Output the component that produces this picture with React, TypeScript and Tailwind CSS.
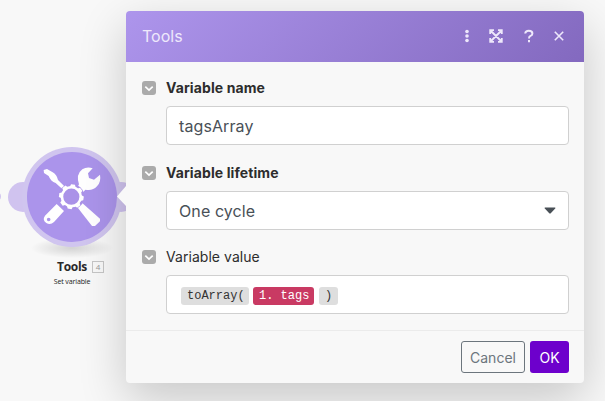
import type { ReactNode } from 'react';

const teeth = [0, 45, 90, 135, 180, 225, 270, 315];

function ToolsGlyph() {
  return (
    <svg viewBox="0 0 252 270" className="absolute left-[30px] top-[150px] h-[90px] w-[84px]" fill="#fff">
      <path d="M41 60L51 57L68 67Q80 73 84 90L103 109L96 116L77 99Q62 94 56 78L42 69Z" />
      <path d="M143 110L147 103Q137 73 157 58Q171 49 188 55L174 70L177 84L192 89L210 74Q214 95 201 109Q187 124 166 119L157 129Z" />
      <path d="M141 170L154 157L210 206V214L195 228H186Z" />
      <path fillRule="evenodd" d="M80 162L102 183L72 216Q61 226 49 219Q36 210 45 197ZM56 203A5.5 5.5 0 1 0 56 214A5.5 5.5 0 1 0 56 203Z" />
      <circle cx="124" cy="140" r="39" fill="#aa92e8" />
      <circle cx="124" cy="140" r="28" fill="none" stroke="#fff" strokeWidth="7.5" />
      {teeth.map((angle) => (
        <path key={angle} d="M118 103H130L133 112H115Z" transform={`rotate(${angle + 8} 124 140)`} />
      ))}
    </svg>
  );
}

function FieldLabel({ children, strong = false }: { children: ReactNode; strong?: boolean }) {
  return (
    <div className="flex h-[18px] items-center">
      <span className="mr-[10px] flex size-[14px] shrink-0 items-center justify-center rounded-[3px] bg-[#ababab]">
        <svg viewBox="0 0 14 14" className="size-[14px]" fill="none" stroke="#fff" strokeWidth="1.7">
          <path d="M3.3 5.7L7 9.1L10.7 5.7" />
        </svg>
      </span>
      <span className={strong ? 'text-[14px] leading-[18px] font-bold tracking-[0.1px] text-[#2d2d2d]' : 'text-[14px] leading-[18px] tracking-[0.05px] text-[#2d2d2d]'}>
        {children}
      </span>
    </div>
  );
}

function Field({ children }: { children: ReactNode }) {
  return (
    <div className="ml-6 flex h-[39px] items-center rounded-[4px] border border-[#d0d0d0] bg-white px-3 text-[16px] tracking-[0.1px] text-[#495057]">
      {children}
    </div>
  );
}

export default function App() {
  return (
    <div className="relative h-[401px] w-[605px] overflow-hidden bg-[#f8f8f8] font-['Inter',sans-serif]">
      <div className="absolute left-[27px] top-[237px] h-[22px] w-[90px] bg-[radial-gradient(ellipse_at_center,rgba(0,0,0,0.15),transparent_65%)]" />
      <svg viewBox="0 0 140 260" className="absolute left-0 top-0 h-[260px] w-[140px]">
        <circle cx="-3" cy="196.5" r="4" fill="#d2c6ee" />
        <circle cx="23" cy="197" r="15" fill="#d0c3ef" />
        <circle cx="121" cy="197" r="15" fill="#d0c3ef" />
        <circle cx="72" cy="197" r="50" fill="#d0c5ef" />
        <circle cx="72" cy="197" r="45" fill="#ab94eb" />
      </svg>
      <ToolsGlyph />
      <div className="absolute left-[57px] top-[259px] flex items-center font-['Open_Sans',sans-serif]">
        <span className="w-[30px] text-[12px] leading-[15px] font-bold tracking-[-0.3px] text-[#292929]">Tools</span>
        <span className="ml-[5px] flex h-[12px] w-[12px] items-center justify-center border border-[#c6c6c6] text-[8px] leading-none text-[#999]">4</span>
      </div>
      <div className="absolute left-[42px] top-[275px] w-[60px] scale-x-[0.88] text-center font-['Open_Sans',sans-serif] text-[8px] leading-[12px] tracking-[-0.15px] text-[#222]">Set variable</div>

      <div className="absolute left-[126px] top-[11px] flex h-[372px] w-[458px] flex-col rounded-[4px] bg-[#f8f8f8] shadow-[0_16px_48px_rgba(0,0,0,0.2)]">
        <svg viewBox="0 0 9 20" className="absolute -left-[9px] top-[175px] h-[20px] w-[9px]"><path d="M9 0V20L0 10.5Z" fill="#f8f8f8" /></svg>
        <header className="flex h-[51px] shrink-0 items-center justify-between rounded-t-[4px] bg-[linear-gradient(135deg,#ad95ec,#8369bf)] pb-[2px] pl-4 pr-5 text-[#eee8fb]">
          <h1 className="text-[16px] leading-5">Tools</h1>
          <div className="flex h-5 items-center">
            <svg viewBox="0 0 4 14" className="h-[14px] w-[4px]" fill="currentColor">
              <circle cx="2" cy="2.5" r="1.8" /><circle cx="2" cy="7" r="1.8" /><circle cx="2" cy="11.5" r="1.8" />
            </svg>
            <svg viewBox="0 0 14 14" className="ml-5 h-[14px] w-[14px]" fill="none" stroke="currentColor" strokeWidth="1.8">
              <path d="M1.2 5V1.2H5M9 1.2H12.8V5M12.8 9V12.8H9M5 12.8H1.2V9M1.5 1.5L12.5 12.5M12.5 1.5L1.5 12.5" />
            </svg>
            <svg viewBox="0 0 10 14" className="ml-[21px] h-[14px] w-[10px]" fill="none" stroke="currentColor" strokeWidth="2">
              <path d="M1.2 4.5Q1.5 1.7 4.8 1.7Q8.4 1.7 8.4 4.4Q8.4 6 6.5 6.9Q5 7.6 5 9.4M5 11.1V13.2" />
            </svg>
            <svg viewBox="0 0 10 10" className="ml-[20px] h-[10px] w-[10px]" fill="none" stroke="currentColor" strokeWidth="1.6">
              <path d="M.8 .8L9.2 9.2M9.2 .8L.8 9.2" />
            </svg>
          </div>
        </header>
        <div className="flex h-[268px] shrink-0 flex-col pl-4 pr-[15px] pt-[17px]">
          <FieldLabel strong>Variable name</FieldLabel>
          <div className="mt-[9px]"><Field>tagsArray</Field></div>
          <div className="mt-[19px]"><FieldLabel strong>Variable lifetime</FieldLabel></div>
          <div className="mt-[9px]">
            <Field>
              <span>One cycle</span>
              <svg viewBox="0 0 12 7" className="ml-auto h-[7px] w-[12px]" fill="#495057"><path d="M1 .4H11Q12 .7 11.2 1.5L7 6Q6 7 5 6L.8 1.5Q0 .7 1 .4Z" /></svg>
            </Field>
          </div>
          <div className="mt-[18px]"><FieldLabel>Variable value</FieldLabel></div>
          <div className="mt-[9px]">
            <Field>
              <div className="ml-[2px] mt-[2px] flex font-['Courier_New','Liberation_Mono',monospace] text-[12px] leading-[18px] tracking-normal text-[#333]">
                <span className="h-[18px] w-[68px] rounded-[3px] bg-[#dedede] pl-[6px]">toArray(</span>
                <span className="ml-1 h-[18px] w-[61px] whitespace-pre rounded-[3px] bg-[#c93a63] pl-[6px] text-white">1. tags</span>
                <span className="ml-[5px] h-[18px] w-[19px] rounded-[3px] bg-[#dedede] pl-[6px]">)</span>
              </div>
            </Field>
          </div>
        </div>
        <footer className="flex flex-1 items-start justify-end gap-[5px] border-t border-[#ebebeb] pr-[15px] pt-[10px] text-[14px]">
          <button className="h-8 w-16 rounded-[3px] border border-[#6c757d] text-[#6c757d]">Cancel</button>
          <button className="h-8 w-[39px] rounded-[3px] bg-[#6d00cc] text-white">OK</button>
        </footer>
      </div>
    </div>
  );
}
